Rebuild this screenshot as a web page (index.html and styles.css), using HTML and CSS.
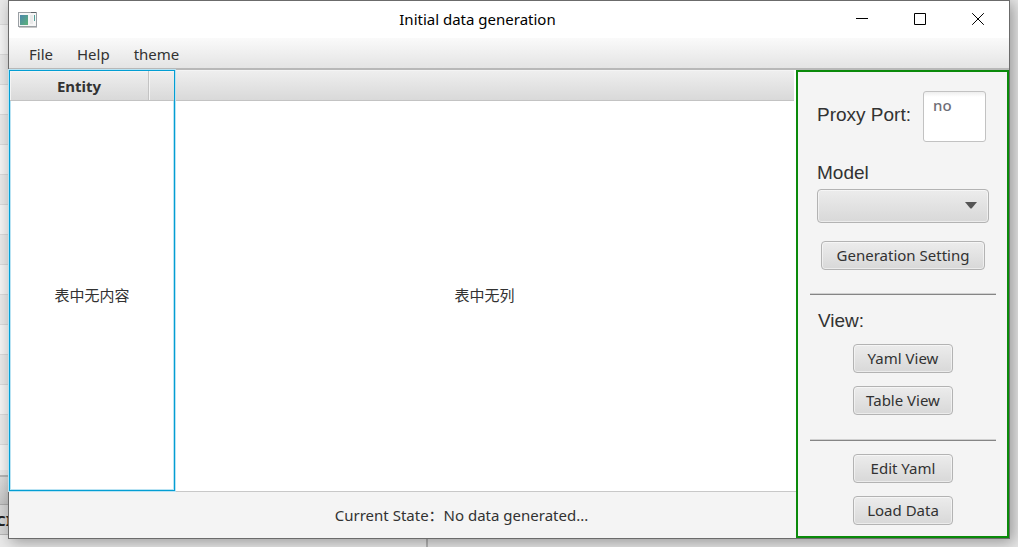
FILE: index.html
```html
<!DOCTYPE html>
<html lang="en">
<head>
<meta charset="utf-8">
<title>Initial data generation</title>
<link rel="stylesheet" href="styles.css">
</head>
<body>
<div class="backdrop" aria-hidden="true">
  <div class="back-rows"></div>
  <div class="back-header"></div>
  <div class="back-cell">CI</div>
  <div class="back-footer"></div>
</div>
<div class="window">
  <header class="titlebar">
    <svg class="app-icon" width="20" height="16" viewBox="0 0 20 16">
      <defs><linearGradient id="g" x1="0" y1="0" x2="1" y2="1"><stop offset="0" stop-color="#4a86ac"/><stop offset="1" stop-color="#5cb377"/></linearGradient></defs>
      <rect x=".5" y=".5" width="18" height="14" fill="#f6f6f6" stroke="#9a9fa4"/>
      <path d="M1 15.500H19" stroke="#c8c8c8"/>
      <path d="M13 .5h5" stroke="#5f6468"/>
      <rect x="2" y="3" width="8" height="10" fill="url(#g)"/>
      <rect x="12" y="3" width="3" height="9" fill="#e9e9e9"/>
      <rect x="16" y="3" width="1" height="6" fill="#4f9f98"/>
    </svg>
    <h1 class="title">Initial data generation</h1>
    <div class="controls">
      <button class="control" aria-label="Minimize"><svg width="12" height="12" viewBox="0 0 12 12"><path d="M0 5.500H12"/></svg></button>
      <button class="control" aria-label="Maximize"><svg width="12" height="12" viewBox="0 0 12 12"><path d="M.5 .5H11.500V11.500H.5Z"/></svg></button>
      <button class="control" aria-label="Close"><svg width="12" height="12" viewBox="0 0 12 12"><path d="M.2 .2L11.800 11.800M11.800 .2L.2 11.800"/></svg></button>
    </div>
  </header>
  <nav class="menubar">
    <button class="menu">File</button>
    <button class="menu">Help</button>
    <button class="menu">theme</button>
  </nav>
  <div class="content">
    <main class="main">
      <div class="tables">
        <table class="grid entity">
          <thead><tr><th>Entity</th><th class="filler"></th></tr></thead>
          <tbody><tr><td colspan="2">表中无内容</td></tr></tbody>
        </table>
        <table class="grid data">
          <thead><tr><th></th></tr></thead>
          <tbody><tr><td>表中无列</td></tr></tbody>
        </table>
      </div>
      <footer class="status">Current State：No data generated...</footer>
    </main>
    <aside class="side">
      <div class="port">
        <label class="label" for="port">Proxy Port:</label>
        <textarea class="port-input" id="port" placeholder="no"></textarea>
      </div>
      <div class="model">
        <label class="label" for="model">Model</label>
        <div class="combo">
          <select class="select" id="model"><option></option></select>
          <svg class="arrow" width="12" height="7" viewBox="0 0 12 7"><path d="M0 0H12L7 6Q6 7 5 6Z" fill="#555"/></svg>
        </div>
      </div>
      <button class="button wide">Generation Setting</button>
      <hr class="rule">
      <h2 class="label view">View:</h2>
      <div class="actions">
        <button class="button">Yaml View</button>
        <button class="button">Table View</button>
      </div>
      <hr class="rule second">
      <div class="actions last">
        <button class="button">Edit Yaml</button>
        <button class="button">Load Data</button>
      </div>
    </aside>
  </div>
</div>
</body>
</html>
```
FILE: styles.css
```css
* { box-sizing: border-box; }

body {
  margin: 0;
  height: 100vh;
  padding: 0 8px 8px;
  overflow: hidden;
  position: relative;
  background: #e6e6e6;
  color: #323232;
  font: 15px/20px "Noto Sans", "Noto Sans CJK SC", sans-serif;
}

button, select, textarea { font: inherit; color: inherit; }

.backdrop {
  position: absolute;
  inset: 0;
  display: flex;
  flex-direction: column;
}
.back-rows, .back-header, .back-cell { width: 12px; }
.back-rows {
  flex: 1;
  background: repeating-linear-gradient(#e9e9e9 0 29px, #dadada 29px 30px, #f4f4f4 30px 59px, #dadada 59px 60px) 0 -5px;
  border-bottom: 2px solid #b4b4b4;
}
.back-header { height: 28px; background: linear-gradient(#dcdcdc, #c4c4c4); border-bottom: 1px solid #aaa; }
.back-cell {
  height: 30px;
  background: #d5d5d5;
  border-bottom: 1px solid #b4b4b4;
  color: #222;
  font-weight: 700;
  line-height: 30px;
  text-indent: -4px;
}
.back-footer { height: 12px; background: linear-gradient(90deg, #e9e9e9 0 426px, #b4b4b4 426px 428px, #e6e6e6 428px); }

.window {
  position: relative;
  height: 100%;
  display: flex;
  flex-direction: column;
  border: 1px solid #6b6b6b;
  background: #f4f4f4;
  box-shadow: 3px 3px 14px rgba(0, 0, 0, .35);
}

.titlebar {
  display: grid;
  grid-template-columns: 1fr auto 1fr;
  align-items: center;
  height: 37px;
  padding: 0 2px 0 9px;
  background: #fff;
  color: #000;
}
.title { margin: 0; padding: 0 70px 2px 0; font-size: 15px; font-weight: 400; }
.controls { display: flex; justify-content: flex-end; }
.control {
  display: grid;
  place-items: center;
  width: 58px;
  height: 36px;
  padding: 0 0 2px;
  border: 0;
  background: none;
}
.control path { fill: none; stroke: #000; }

.menubar {
  display: flex;
  height: 32px;
  padding: 0 8px;
  border-bottom: 2px solid #b8b8b8;
  background: linear-gradient(#fafafa, #e4e4e4);
}
.menu { padding: 1px 12px 0; border: 0; background: none; }

.content { flex: 1; display: flex; min-height: 0; }
.main { flex: 1; display: flex; flex-direction: column; min-width: 0; }
.tables { flex: 1; display: flex; min-height: 0; background: #fff; border-bottom: 1px solid #c8c8c8; }

.grid { border-collapse: separate; border-spacing: 0; height: 100%; background: #fff; }
.grid th {
  height: 30px;
  padding: 0;
  border-bottom: 1px solid #c3c3c3;
  background: linear-gradient(#efefef, #d9d9d9);
  box-shadow: inset 1px 1px #f4f4f4;
  font-weight: 700;
}
.grid th + th { border-left: 1px solid #c3c3c3; }
.grid td { padding: 0 0 2px; text-align: center; vertical-align: middle; }
.entity {
  position: relative;
  width: 166px;
  border: 1px solid #039ed3;
  box-shadow: 0 0 0 1px #b9e3f3, inset 0 0 0 1px #b9e3f3;
}
.filler { width: 26px; }
.data { flex: 1; margin-right: 2px; }
.data th { height: 31px; }

.status {
  display: flex;
  justify-content: center;
  align-items: center;
  height: 46px;
  padding-left: 118px;
}

.side {
  width: 213px;
  padding: 19px 11px 11px 12px;
  border: 2px solid #0a8a0a;
  display: flex;
  flex-direction: column;
}
.label { margin: 0; font: 400 19px/22px "Liberation Sans", sans-serif; }
.port { display: flex; align-items: center; justify-content: space-between; padding: 0 10px 0 7px; }
.port .label { padding-bottom: 4px; }
.port-input {
  width: 63px;
  height: 51px;
  padding: 3px 9px;
  border: 1px solid #c2c2c2;
  border-radius: 3px;
  background: linear-gradient(#eee, #fff 5px);
  resize: none;
  overflow: hidden;
}
.port-input::placeholder { color: #6e6e76; font-weight: 500; opacity: 1; }
.model { display: flex; flex-direction: column; gap: 5px; margin-top: 20px; padding: 0 7px; }
.combo { position: relative; }
.select, .button {
  border: 1px solid #b3b3b3;
  border-radius: 4px;
  background: linear-gradient(#ececec, #d8d8d8);
  box-shadow: inset 0 0 0 1px rgba(255, 255, 255, .5);
}
.select { display: block; width: 100%; height: 34px; appearance: none; }
.arrow { position: absolute; right: 12px; top: 13px; pointer-events: none; }
.button { height: 29px; width: 100px; padding: 0 0 2px; white-space: nowrap; }
.wide { width: 164px; margin: 18px auto 0; }
.rule { width: 100%; height: 2px; margin: 23px 0 0; border: 0; border-top: 1px solid #d0d0d0; border-bottom: 1px solid #858585; }
.view { margin-top: 15px; padding-left: 8px; }
.actions { display: flex; flex-direction: column; align-items: center; gap: 13px; margin-top: 12px; }
.second { margin-top: 24px; }
.last { margin-top: 13px; }
```
